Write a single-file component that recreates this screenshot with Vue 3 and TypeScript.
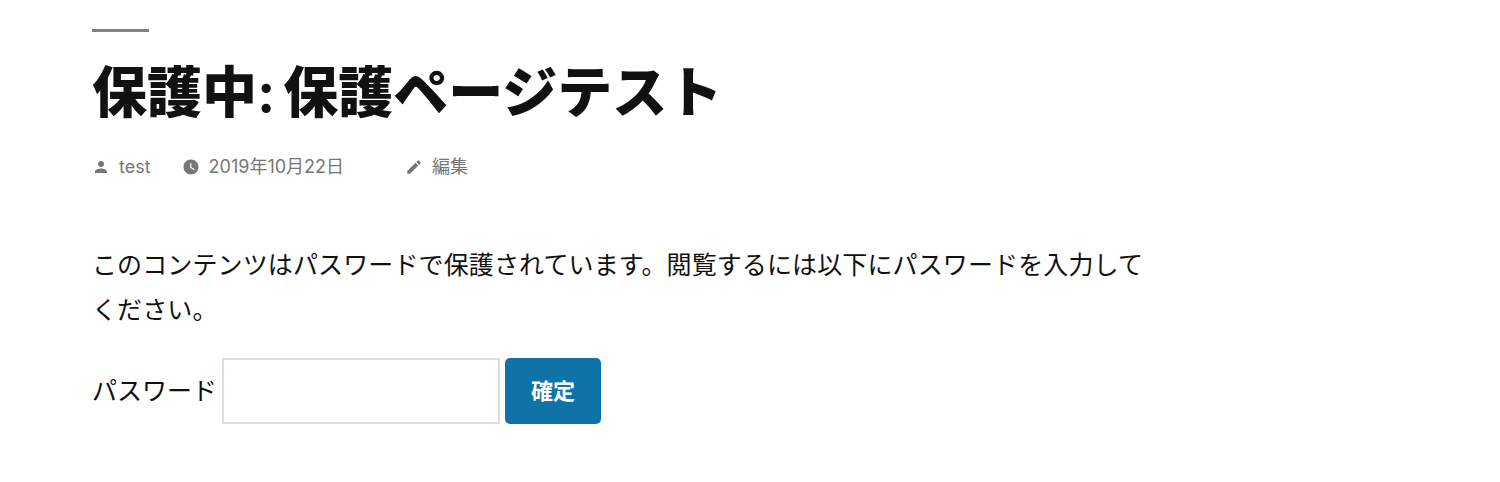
<script setup lang="ts">
const protectedLabel = '保護中'
const pageName = '保護ページテスト'
</script>

<template>
  <main class="page">
    <div class="rule"></div>
    <h1 class="title">{{ protectedLabel }}<span class="colon">:</span> {{ pageName }}</h1>
    <div class="meta">
      <span class="item author">
        <svg class="icon" viewBox="0 0 24 24"><path d="M12 12c2.21 0 4-1.790 4-4s-1.790-4-4-4-4 1.790-4 4 1.790 4 4 4zm0 2c-2.670 0-8 1.340-8 4v2h16v-2c0-2.660-5.330-4-8-4z"/></svg>
        test
      </span>
      <span class="item date">
        <svg class="icon" viewBox="0 0 24 24"><path d="M12 2C6.500 2 2 6.500 2 12s4.500 10 10 10 10-4.500 10-10S17.500 2 12 2zm4.200 14.200L11 13V7h1.500v5.200l4.500 2.700-.8 1.300z"/></svg>
        2019年10月22日
      </span>
      <span class="item edit">
        <svg class="icon" viewBox="0 0 24 24"><path d="M3 17.250V21h3.750L17.810 9.940l-3.750-3.750L3 17.250zM20.710 7.040a1 1 0 0 0 0-1.410l-2.340-2.340a1 1 0 0 0-1.410 0l-1.830 1.830 3.750 3.750 1.830-1.830z"/></svg>
        編集
      </span>
    </div>
    <p class="message">このコンテンツはパスワードで保護されています。閲覧するには以下にパスワードを入力してください。</p>
    <form class="form" @submit.prevent>
      <label class="label" for="pw">パスワード</label>
      <input id="pw" class="input" type="password" />
      <button class="button" type="submit">確定</button>
    </form>
  </main>
</template>

<style>
html, body { margin: 0; background: #fff; }
</style>

<style scoped>
.page {
  box-sizing: border-box;
  width: 1500px;
  height: 482px;
  padding: 29px 0 0 92px;
  font-family: Inter, "Noto Sans CJK JP", sans-serif;
  color: #111;
  overflow: hidden;
}
.rule { width: 57px; height: 3px; background: #808080; }
.title {
  margin: 26px 0 0;
  font-size: 55px;
  line-height: 68px;
  font-weight: 900;
  word-spacing: -3px;
  color: #111;
}
.colon { font-weight: 700; }
.meta {
  display: flex;
  align-items: center;
  margin-top: 29px;
  font-size: 18px;
  line-height: 24px;
  color: #767676;
}
.item { display: flex; align-items: center; gap: 9px; }
.author { margin-right: 31px; }
.date { margin-right: 61px; }
.icon { width: 18px; height: 18px; fill: #767676; }
.message {
  width: 1060px;
  margin: 64px 0 0;
  font-size: 25px;
  letter-spacing: 0.12px;
  line-height: 45px;
}
.form { display: flex; align-items: center; margin-top: 25px; font-size: 25px; }
.label { margin-right: 5px; padding-bottom: 4px; }
.input {
  box-sizing: border-box;
  width: 278px;
  height: 66px;
  border: 2px solid #ddd;
  margin-right: 5px;
  background: #fff;
}
.button {
  box-sizing: border-box;
  width: 96px;
  height: 66px;
  border: 0;
  border-radius: 5px;
  padding: 0 0 4px;
  background: #0f73a8;
  color: #fff;
  font: 700 22px Inter, "Noto Sans CJK JP", sans-serif;
}
</style>
